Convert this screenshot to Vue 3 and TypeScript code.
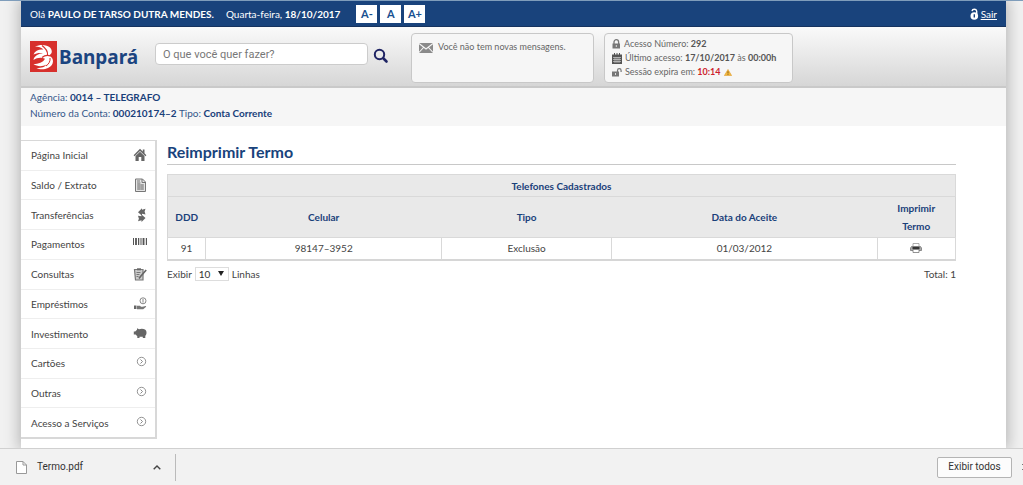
<script setup lang="ts">
import { ref } from 'vue'

interface MenuItem {
  label: string
  icon: string
}

interface Phone {
  ddd: string
  celular: string
  tipo: string
  data: string
}

const menu: MenuItem[] = [
  { label: 'Página Inicial', icon: 'home' },
  { label: 'Saldo / Extrato', icon: 'statement' },
  { label: 'Transferências', icon: 'transfer' },
  { label: 'Pagamentos', icon: 'barcode' },
  { label: 'Consultas', icon: 'query' },
  { label: 'Empréstimos', icon: 'loan' },
  { label: 'Investimento', icon: 'pig' },
  { label: 'Cartões', icon: 'arrow' },
  { label: 'Outras', icon: 'arrow' },
  { label: 'Acesso a Serviços', icon: 'arrow' },
]

const phones: Phone[] = [
  { ddd: '91', celular: '98147–3952', tipo: 'Exclusão', data: '01/03/2012' },
]

const sizes: string[] = ['A-', 'A', 'A+']
const search = ref('')
const perPage = ref('10')
</script>

<template>
  <div class="window">
    <div class="viewport">
      <div class="page">
        <div class="topbar">
          <span class="hello">Olá <b>PAULO DE TARSO DUTRA MENDES.</b></span>
          <span class="date">Quarta-feira, <b>18/10/2017</b></span>
          <div class="sizes">
            <button v-for="s in sizes" :key="s" type="button">{{ s }}</button>
          </div>
          <a href="#" class="exit">
            <svg width="9" height="12" viewBox="0 0 9 12" aria-hidden="true">
              <path d="M2 3.2a2.4 2.4 0 0 1 4.7 0V6" fill="none" stroke="#fff" stroke-width="1.4" />
              <circle cx="4.3" cy="8" r="3.8" fill="#fff" />
              <path d="M4.3 6.3v3.2" stroke="#19437c" stroke-width="1.4" />
            </svg>
            <span>Sair</span>
          </a>
        </div>

        <header class="header">
          <a href="#" class="logo">
            <svg width="27" height="31" viewBox="0 0 27 31" aria-hidden="true">
              <rect width="27" height="31" fill="#d7302c" />
              <path d="M5 5.500C10 3 17 3.500 20 6.500C23 10 22 13 19 14.500C24.500 17 24.500 24 18 27C14 29 9 28.500 6.500 27C12 27 15 26 16.500 23.500C12 26 7 25.500 3.500 23C8.500 23 13 21.500 15 17.800C11.500 16 7 16.500 3.500 19C4 15 8.500 12.500 13 12.300C10 11.500 6.500 12 3.500 13.500C5 9.500 9 8 13.500 8.500C11.500 6.500 8.500 5.500 5 5.500Z" fill="#fff" />
              <path d="M12 4.500C16 7.500 18 10.500 17.500 14" fill="none" stroke="#d7302c" stroke-width="1.200" />
              <path d="M12 16.500C15 14 18 14 20.500 15" fill="none" stroke="#d7302c" stroke-width="1.200" />
              <path d="M20 17C20.500 20 19 23 16 25" fill="none" stroke="#d7302c" stroke-width="1" />
            </svg>
            <span>Banpará</span>
          </a>
          <form class="search" @submit.prevent>
            <input v-model="search" type="text" aria-label="O que você quer fazer?" placeholder="O que você quer fazer?" />
            <button type="submit" aria-label="Buscar">
              <svg width="16" height="16" viewBox="0 0 16 16">
                <circle cx="6.500" cy="6.500" r="4.700" fill="none" stroke="#1f2464" stroke-width="2" />
                <path d="M10.500 10.500l3 3" stroke="#1f2464" stroke-width="2.600" stroke-linecap="round" />
              </svg>
            </button>
          </form>
          <div class="panel messages">
            <svg width="14" height="10" viewBox="0 0 14 10" aria-hidden="true">
              <rect width="14" height="10" fill="#8a8a8a" />
              <path d="M0 .5l7 5.500 7-5.500M0 9.500l4.500-5M14 9.500l-4.500-5" fill="none" stroke="#f6f6f6" stroke-width="1.100" />
            </svg>
            <span>Você não tem novas mensagens.</span>
          </div>
          <div class="panel access">
            <p>
              <svg width="9" height="10" viewBox="0 0 9 10" aria-hidden="true">
                <path d="M2 5V3a2.200 2.200 0 0 1 4.600 0v2" fill="none" stroke="#777" stroke-width="1.300" />
                <path d="M.5 4.500h7.500V9.500H.5z" fill="#777" />
                <path d="M4.300 6v2" stroke="#ddd" />
              </svg>
              <span>Acesso Número: <b>292</b></span>
            </p>
            <p>
              <svg width="10" height="11" viewBox="0 0 10 11" aria-hidden="true">
                <path d="M0 1.500h10V11H0z" fill="#555" />
                <path d="M2.500 0v2.500M5 0v2.500M7.500 0v2.500" stroke="#555" />
                <path d="M1 4.500h8M1 6.500h8M1 8.500h8M3 4v6M5 4v6M7 4v6" stroke="#ccc" stroke-width=".7" />
              </svg>
              <span>Último acesso: <b>17/10/2017</b> às <b>00:00h</b></span>
            </p>
            <p>
              <svg width="10" height="9" viewBox="0 0 10 9" aria-hidden="true">
                <path d="M0 3.500h7V8.500H0z" fill="#777" />
                <path d="M5.500 4V2.500a1.800 1.800 0 0 1 3.600 0V4" fill="none" stroke="#777" stroke-width="1.200" />
                <path d="M3.500 5v2" stroke="#ddd" />
              </svg>
              <span>Sessão expira em: <b class="time">10:14</b></span>
              <svg width="8" height="7" viewBox="0 0 8 7" aria-hidden="true">
                <path d="M4 .5L7.600 6.600H.4z" fill="#f6b93c" stroke="#dfa23a" stroke-width=".7" />
                <path d="M4 2.300v2.200M4 5.200v.8" stroke="#6b4a10" stroke-width=".8" />
              </svg>
            </p>
          </div>
        </header>

        <div class="account">
          <p>Agência: <b>0014 – TELEGRAFO</b></p>
          <p>Número da Conta: <b>000210174–2</b> Tipo: <b>Conta Corrente</b></p>
        </div>

        <div class="body">
          <nav class="menu">
            <a v-for="m in menu" :key="m.label" href="#">
              <span>{{ m.label }}</span>
              <svg width="14" height="14" viewBox="0 0 14 14" aria-hidden="true">
                <g v-if="m.icon === 'home'" fill="#666">
                  <path d="M7 .8L.6 7.200l1 1L7 3l5.400 5.200 1-1L11.500 5.200V1.500H9.800V3.600z" />
                  <path d="M2.500 8L7 3.800 11.500 8v5H8.300V9H5.700v4H2.500z" />
                </g>
                <g v-else-if="m.icon === 'statement'">
                  <path d="M2.500 1h7l3 3v9.500h-10z" fill="#e4e4e4" stroke="#777" />
                  <path d="M9 1v3.500h3.500M4 3h3M4 5h3.500M4 7h7M4 9h7M4 11h7" fill="none" stroke="#777" />
                  <path d="M6 5v7M9 6v6" stroke="#888" stroke-width=".6" />
                </g>
                <g v-else-if="m.icon === 'transfer'" fill="#666">
                  <path d="M5 4.200L9 .2v1.600l3.500-1-.9 2.600.9 3-3.500-.6v1.900z" />
                  <path d="M12.500 10l-4 4v-1.700l-3.500 1 .9-2.600-.9-3 3.500.6V6.500z" />
                </g>
                <g v-else-if="m.icon === 'barcode'">
                  <path d="M.5 1v7M5.500 1v7M8 1v7M13.500 1v7" stroke="#555" />
                  <path d="M3 1v7M10.500 1v7" stroke="#555" stroke-width="1.800" />
                  <path d="M6.800 1v7M12 1v7" stroke="#999" stroke-width=".6" />
                </g>
                <g v-else-if="m.icon === 'query'">
                  <path d="M1.500 2.500H10v10.500H2.500z" fill="#ccc" stroke="#777" stroke-width="1.200" />
                  <path d="M4 1.300h4v2H4z" fill="#666" />
                  <path d="M3.500 5.500h4M3.500 7.500h3M3.500 9.500h2" stroke="#777" />
                  <path d="M13.200 3L7.500 9.500 6 11.500" stroke="#666" stroke-width="1.700" fill="none" />
                </g>
                <g v-else-if="m.icon === 'loan'">
                  <circle cx="10" cy="3.800" r="3" fill="none" stroke="#888" />
                  <path d="M10 2v3.600" stroke="#888" />
                  <path d="M1 8.500h2.500v3.500H1z" fill="#666" />
                  <path d="M4 8.800h3l1 1h1.500L12.800 9l.4.800-3 2.500H4z" fill="#777" />
                </g>
                <g v-else-if="m.icon === 'pig'" fill="#666">
                  <path d="M.8 4.500h1.400L4 2.800V1.200l2 1c2-.8 4.500-.7 6 .3 1.300 1 1.500 2 1.500 3.300s-.5 2.200-1.200 3V11H9.800V9.800H6.500V11H4.300V9.200L2.600 7.600H.8z" />
                </g>
                <g v-else fill="none" stroke="#888">
                  <circle cx="8.500" cy="5.500" r="4.200" stroke-width=".9" />
                  <path d="M7.500 3.500l2 2-2 2" />
                </g>
              </svg>
            </a>
          </nav>

          <main class="content">
            <h1>Reimprimir Termo</h1>
            <table>
              <colgroup>
                <col class="c-ddd" />
                <col class="c-cel" />
                <col class="c-tipo" />
                <col class="c-data" />
                <col class="c-print" />
              </colgroup>
              <thead>
                <tr class="caption">
                  <th colspan="5">Telefones Cadastrados</th>
                </tr>
                <tr class="heads">
                  <th>DDD</th>
                  <th>Celular</th>
                  <th>Tipo</th>
                  <th>Data do Aceite</th>
                  <th>Imprimir Termo</th>
                </tr>
              </thead>
              <tbody>
                <tr v-for="p in phones" :key="p.celular">
                  <td>{{ p.ddd }}</td>
                  <td>{{ p.celular }}</td>
                  <td>{{ p.tipo }}</td>
                  <td>{{ p.data }}</td>
                  <td>
                    <button type="button" class="print" aria-label="Imprimir">
                      <svg width="12" height="10" viewBox="0 0 12 10">
                        <path d="M3 .5h6v3H3z" fill="#fff" stroke="#999" stroke-width=".8" />
                        <path d="M1.500 3.500h9l1 1.500v2.500H.5V5z" fill="#aaa" stroke="#777" stroke-width=".8" />
                        <path d="M2.500 4h7v2h-7z" fill="#333" />
                        <path d="M3 6.500h6v3H3z" fill="#fff" stroke="#777" stroke-width=".8" />
                      </svg>
                    </button>
                  </td>
                </tr>
              </tbody>
            </table>
            <div class="pager">
              <label for="rows">Exibir</label>
              <span class="pick">
                <select id="rows" v-model="perPage">
                  <option>10</option>
                  <option>20</option>
                  <option>50</option>
                </select>
                <svg width="6" height="5" viewBox="0 0 6 5" aria-hidden="true"><path d="M0 0h6L3 5z" fill="#222" /></svg>
              </span>
              <span>Linhas</span>
              <span class="total">Total: 1</span>
            </div>
          </main>
        </div>
      </div>
    </div>

    <footer class="downloads">
      <div class="file">
        <svg width="11" height="13" viewBox="0 0 11 13" aria-hidden="true">
          <path d="M.5.5h6.500l3.500 3.500v8.500H.5z" fill="#fff" stroke="#999" />
          <path d="M7 .5V4h3.500" fill="none" stroke="#999" />
        </svg>
        <span>Termo.pdf</span>
        <button type="button" aria-label="Opções do arquivo">
          <svg width="8" height="5" viewBox="0 0 8 5"><path d="M.7 4.300L4 1l3.300 3.300" fill="none" stroke="#444" stroke-width="1.400" /></svg>
        </button>
      </div>
      <button type="button" class="all">Exibir todos</button>
      <button type="button" class="close" aria-label="Fechar">
        <svg width="8" height="8" viewBox="0 0 8 8"><path d="M1 1l6 6M7 1L1 7" stroke="#777" /></svg>
      </button>
    </footer>
  </div>
</template>

<style>
body {
  margin: 0;
  background: #f1f1f1;
}
</style>

<style scoped>
* {
  box-sizing: border-box;
}
.window {
  display: flex;
  flex-direction: column;
  height: 100vh;
  overflow: hidden;
  font-family: Lato, "Open Sans", sans-serif;
  font-size: 10px;
  line-height: 16px;
  color: #444;
}
.viewport {
  flex: 1;
  min-height: 0;
  overflow: hidden;
  padding: 0 17px 0 21px;
  border-top: 1px solid #7f9dbb;
}
.page {
  min-height: 100%;
  background: #fff;
  box-shadow: 0 0 14px 2px rgba(0, 0, 0, 0.25);
}
p,
h1 {
  margin: 0;
}
button {
  font: inherit;
  color: inherit;
  border: 0;
  padding: 0;
  background: none;
  cursor: pointer;
}
svg {
  display: block;
  flex: none;
}
a {
  color: inherit;
  text-decoration: none;
}

.topbar {
  display: flex;
  align-items: center;
  height: 26px;
  padding: 0 9px;
  color: #fff;
  background: #19437c;
  border-bottom: 1px solid #16335f;
}
.date {
  margin-left: 12px;
}
.sizes {
  display: flex;
  gap: 3px;
  margin-left: 16px;
}
.sizes button {
  width: 21px;
  height: 18px;
  background: #fff;
  color: #19508f;
  font-size: 11px;
  font-weight: 700;
}
.exit {
  display: flex;
  align-items: center;
  gap: 2px;
  margin-left: auto;
}
.exit span {
  text-decoration: underline;
}

.header {
  display: flex;
  align-items: flex-start;
  height: 61px;
  padding: 6px 9px 0;
  background: linear-gradient(#fafafa, #d6d6d6);
  border-bottom: 2px solid #c9c9c9;
}
.logo {
  display: flex;
  align-items: center;
  gap: 2px;
  width: 125px;
  padding-top: 8px;
  color: #1b4480;
  font: 700 19px/28px "Noto Sans", sans-serif;
}
.search {
  display: flex;
  align-items: center;
  gap: 5px;
  padding-top: 10px;
}
.search input {
  width: 213px;
  height: 22px;
  padding: 0 7px;
  border: 1px solid #ccc;
  border-radius: 4px;
  background: #fff;
  font: 11px/20px Roboto, sans-serif;
  color: #444;
}
.search input::placeholder {
  color: #777;
}
.search button {
  margin-top: 4px;
}
.panel {
  height: 50px;
  border: 1px solid #c8c8c8;
  border-radius: 4px;
  background: #f6f6f6;
  font-size: 9px;
  line-height: 14px;
  color: #666;
}
.messages {
  display: flex;
  gap: 5px;
  width: 183px;
  margin-left: 22px;
  padding: 6px 7px;
}
.messages svg {
  margin-top: 3px;
}
.access {
  width: 189px;
  margin-left: 10px;
  padding: 3px 7px;
}
.access p {
  display: flex;
  align-items: center;
  gap: 3px;
}
.access b {
  color: #555;
}
.access .time {
  color: #cc1f2d;
}

.account {
  padding: 1px 9px 5px;
  background: #f6f6f6;
  color: #34568a;
}
.account p {
  line-height: 16px;
}
.account b {
  color: #19407a;
}

.body {
  display: flex;
  align-items: flex-start;
  gap: 10px;
  padding: 14px 50px 8px 0;
}
.menu {
  display: flex;
  flex-direction: column;
  width: 136px;
  height: 299px;
  border: solid #d8d8d8;
  border-width: 1px 2px 2px 0;
}
.menu a {
  flex: 1;
  display: flex;
  align-items: center;
  justify-content: space-between;
  padding: 0 8px 0 10px;
}
.menu a + a {
  border-top: 1px solid #eee;
}

.content {
  flex: 1;
}
h1 {
  font-size: 16px;
  line-height: 24px;
  font-weight: 700;
  color: #19437c;
  border-bottom: 1px solid #c8c8c8;
}
table {
  width: 100%;
  margin-top: 9px;
  table-layout: fixed;
  border-collapse: collapse;
  border: 1px solid #d6d6d6;
  border-bottom-width: 2px;
  text-align: center;
}
th,
td {
  padding: 0;
  border: 1px solid #d9d9d9;
}
th {
  background: #e9e9e9;
  color: #19407a;
  line-height: 18px;
}
.caption th {
  height: 22px;
}
.heads th {
  height: 41px;
  border-left: 0;
  border-right: 0;
}
.heads th:last-child {
  padding: 0 16px;
}
td {
  height: 22px;
}
.c-ddd {
  width: 38px;
}
.c-cel {
  width: 30%;
}
.c-tipo {
  width: 21.5%;
}
.c-print {
  width: 78px;
}
.print {
  display: block;
  margin: 0 auto;
}
.pager {
  display: flex;
  align-items: center;
  gap: 3px;
  margin-top: 5px;
}
.pick {
  display: grid;
  align-items: center;
}
.pick > * {
  grid-area: 1 / 1;
}
.pick svg {
  justify-self: end;
  margin-right: 5px;
  pointer-events: none;
}
.pick select {
  appearance: none;
  width: 34px;
  height: 14px;
  padding: 0 3px;
  border: 1px solid #ddd;
  border-radius: 0;
  background: #fff;
  font: inherit;
  line-height: 12px;
  color: #333;
}
.total {
  margin-left: auto;
}

.downloads {
  display: flex;
  align-items: center;
  height: 37px;
  flex: none;
  padding-left: 16px;
  background: #f2f2f2;
  border-top: 1px solid #d0d0d0;
  font-family: Roboto, "Open Sans", sans-serif;
  color: #333;
  overflow: hidden;
}
.file {
  display: flex;
  align-items: center;
  width: 160px;
  height: 27px;
  padding-right: 14px;
  border-right: 1px solid #bbb;
}
.file span {
  margin-left: 10px;
}
.file button {
  margin-left: auto;
}
.all {
  width: 75px;
  height: 21px;
  margin-left: auto;
  border: 1px solid #b4b4b4;
  border-radius: 2px;
  background: #fcfcfc;
}
.close {
  width: 11px;
  flex: none;
  padding-left: 9px;
  overflow: hidden;
}
</style>
